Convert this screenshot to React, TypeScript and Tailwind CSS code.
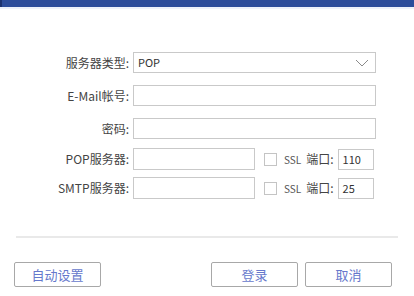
import React from 'react';

const font = { fontFamily: '"Noto Sans CJK SC", "Liberation Sans", sans-serif' };

function Label({ children }: { children: React.ReactNode }) {
  return <span className="w-[130px] pr-[1px] text-right text-[12px] text-[#444] leading-none whitespace-nowrap">{children}</span>;
}

function Box({ className = '', children }: { className?: string; children?: React.ReactNode }) {
  return (
    <div className={`h-[21px] border border-[#c9c9c9] bg-white flex items-center px-[4px] text-[11px] text-[#333] ${className}`}>
      {children}
    </div>
  );
}

function SslPort({ port }: { port: string }) {
  return (
    <div className="flex items-center ml-[9px]">
      <span className="w-[13px] h-[13px] border border-[#c4c4c4] bg-white" />
      <span className="ml-[7px] text-[10px] text-[#555]">SSL</span>
      <span className="ml-[5px] text-[12px] text-[#444]">端口:</span>
      <Box className="ml-[4px] w-[36px]">{port}</Box>
    </div>
  );
}

export default function App() {
  return (
    <div className="w-[414px] h-[296px] bg-white flex flex-col" style={font}>
      <div className="h-[7px] bg-[#2d4d9b] border-l-2 border-[#1c3270]" />
      <div className="h-[2px] bg-[#eef2fb]" />

      <div className="flex flex-col mt-[43px]">
        <div className="flex items-center h-[21px]">
          <Label>服务器类型:</Label>
          <Box className="ml-[3px] w-[243px] justify-between">
            <span>POP</span>
            <svg width="14" height="8" viewBox="0 0 14 8" className="mr-[2px]">
              <path d="M1 1 L7 7 L13 1" fill="none" stroke="#8a8a8a" strokeWidth="1" />
            </svg>
          </Box>
        </div>

        <div className="flex items-center h-[21px] mt-[12px]">
          <Label>E-Mail帐号:</Label>
          <Box className="ml-[3px] w-[243px]" />
        </div>

        <div className="flex items-center h-[21px] mt-[12px]">
          <Label>密码:</Label>
          <Box className="ml-[3px] w-[243px]" />
        </div>

        <div className="flex items-center h-[22px] mt-[9px]">
          <Label>POP服务器:</Label>
          <Box className="ml-[3px] w-[122px] h-[22px]" />
          <SslPort port="110" />
        </div>

        <div className="flex items-center h-[22px] mt-[7px]">
          <Label>SMTP服务器:</Label>
          <Box className="ml-[3px] w-[122px] h-[22px]" />
          <SslPort port="25" />
        </div>
      </div>

      <div className="mt-[37px] mx-[16px] h-[2px] bg-[#e9e9e9]" />

      <div className="flex mt-[24px] px-[14px]">
        <button className="w-[87px] h-[25px] border border-[#a8a8a8] rounded-[2px] bg-white text-[13px] text-[#6678cc]">
          自动设置
        </button>
        <button className="ml-[110px] w-[87px] h-[25px] border border-[#a8a8a8] rounded-[2px] bg-white text-[13px] text-[#6678cc]">
          登录
        </button>
        <button className="ml-[7px] w-[87px] h-[25px] border border-[#a8a8a8] rounded-[2px] bg-white text-[13px] text-[#6678cc]">
          取消
        </button>
      </div>
    </div>
  );
}
